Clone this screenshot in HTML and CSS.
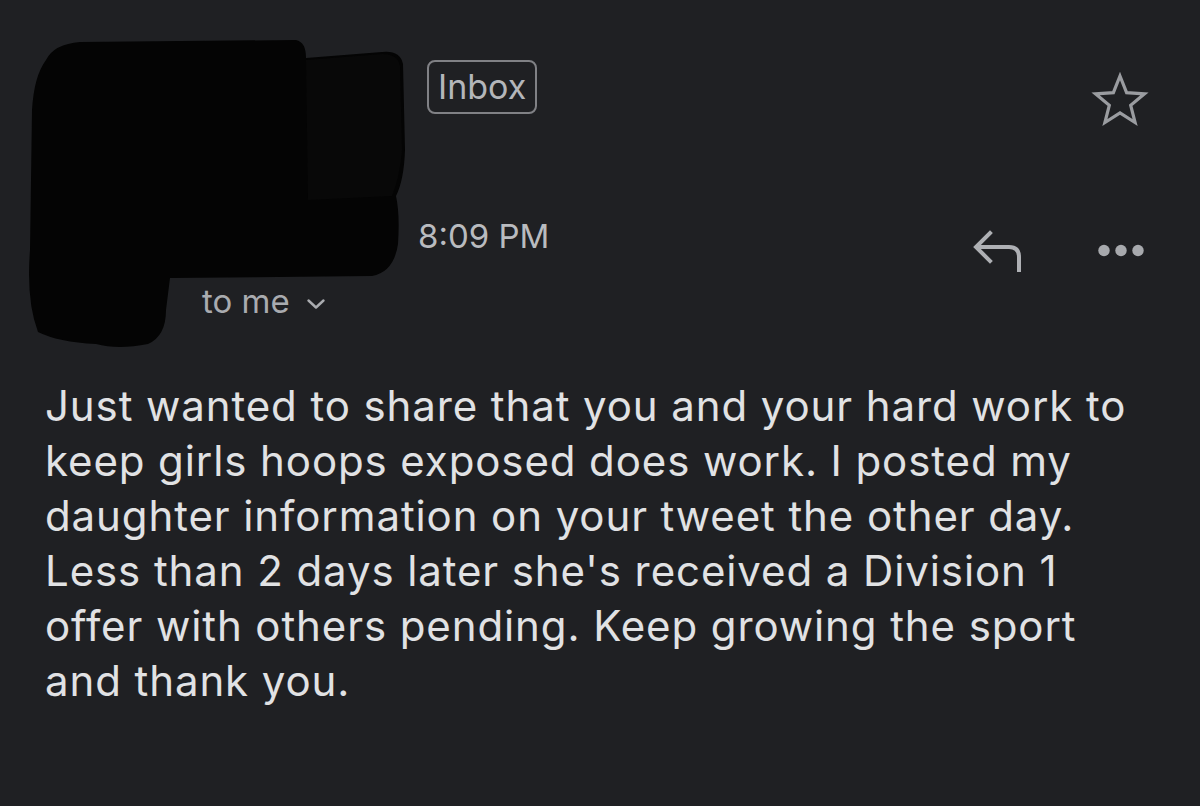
FILE: index.html
```html
<!DOCTYPE html>
<html>
<head>
<meta charset="utf-8">
<link rel="stylesheet" href="styles.css">
</head>
<body>
<div class="mail">
  <header class="head">
    <div class="sender">
      <svg class="redact" width="420" height="360" viewBox="0 0 420 360">
        <path d="M46 60 Q54 44 80 42 L296 40 Q306 42 306 58 L382 52 Q400 50 403 64 L405 150 Q404 180 396 196 Q400 214 398 244 Q394 272 372 276 L170 278 L166 310 Q166 336 148 344 Q118 350 96 344 Q58 342 38 332 Q26 300 30 250 L32 110 Q34 76 46 60 Z" fill="#040404"/>
        <path d="M306 60 L382 54 Q398 54 400 66 L402 150 Q400 176 392 196 L308 200 Z" fill="#080808"/>
      </svg>
      <div class="to">to me
        <svg class="chev" width="20" height="12" viewBox="0 0 20 12"><path d="M2.5 2.5 L10 9.5 L17.5 2.5" fill="none" stroke="#a9abaf" stroke-width="2.4" stroke-linecap="round" stroke-linejoin="round"/></svg>
      </div>
    </div>
    <div class="meta">
      <span class="badge">Inbox</span>
      <span class="time">8:09 PM</span>
    </div>
    <div class="actions">
      <svg class="star" width="58" height="56" viewBox="0 0 58 56">
        <path d="M29 4 L35.6 20.6 L53.5 21.8 L39.7 33.3 L44.1 50.6 L29 41 L13.9 50.6 L18.3 33.3 L4.5 21.8 L22.4 20.6 Z" fill="none" stroke="#9a9ca0" stroke-width="3.2" stroke-linejoin="miter"/>
      </svg>
      <div class="tools">
        <svg class="reply" width="56" height="44" viewBox="0 0 56 44">
          <path d="M19 3 L5 17 L19 31" fill="none" stroke="#aeb0b4" stroke-width="4" stroke-linecap="square" stroke-linejoin="miter"/>
          <path d="M6 17 L38 17 Q48 17 48 27 L48 42" fill="none" stroke="#aeb0b4" stroke-width="4"/>
        </svg>
        <svg class="dots" width="46" height="13" viewBox="0 0 46 13">
          <circle cx="6" cy="6.5" r="5.7" fill="#a7a9ad"/>
          <circle cx="23" cy="6.5" r="5.7" fill="#a7a9ad"/>
          <circle cx="40" cy="6.5" r="5.7" fill="#a7a9ad"/>
        </svg>
      </div>
    </div>
  </header>
  <p class="body">Just wanted to share that you and your hard work to keep girls hoops exposed does work. I posted my daughter information on your tweet the other day. Less than 2 days later she's received a Division 1 offer with others pending. Keep growing the sport and thank you.</p>
</div>
</body>
</html>
```
FILE: styles.css
```css
html, body {
  margin: 0;
  padding: 0;
  background: #1f2023;
}
body {
  width: 1200px;
  height: 806px;
  overflow: hidden;
  font-family: Inter, Roboto, "Liberation Sans", sans-serif;
}
.mail {
  width: 1200px;
  height: 806px;
}
.head {
  display: flex;
  height: 378px;
}
.sender {
  position: relative;
  width: 418px;
  flex: none;
}
.redact {
  position: absolute;
  left: 0;
  top: 0;
}
.to {
  position: relative;
  padding: 281px 0 0 202px;
  font-size: 33px;
  line-height: 40px;
  color: #a9abaf;
  display: flex;
  align-items: center;
  gap: 16px;
}
.chev {
  margin-top: 6px;
}
.meta {
  display: flex;
  flex-direction: column;
  align-items: flex-start;
  padding-top: 60px;
}
.badge {
  margin-left: 9px;
  box-sizing: border-box;
  height: 54px;
  padding: 0 9px;
  border: 2.5px solid #808185;
  border-radius: 8px;
  font-size: 34px;
  line-height: 49px;
  color: #b4b6ba;
}
.time {
  margin-top: 104px;
  font-size: 33px;
  line-height: 36px;
  color: #b9bbbf;
}
.actions {
  margin-left: auto;
  width: 260px;
  display: flex;
  flex-direction: column;
  align-items: flex-end;
  padding: 72px 52px 0 0;
}
.star {
  margin-right: -1px;
}
.tools {
  margin-top: 102px;
  display: flex;
  align-items: flex-start;
  gap: 71px;
}
.dots {
  margin-top: 14px;
  margin-right: 4px;
}
.body {
  margin: 0;
  padding: 0 40px 0 45px;
  font-size: 42px;
  line-height: 55px;
  letter-spacing: 0.9px;
  color: #e1e2e4;
}
```
